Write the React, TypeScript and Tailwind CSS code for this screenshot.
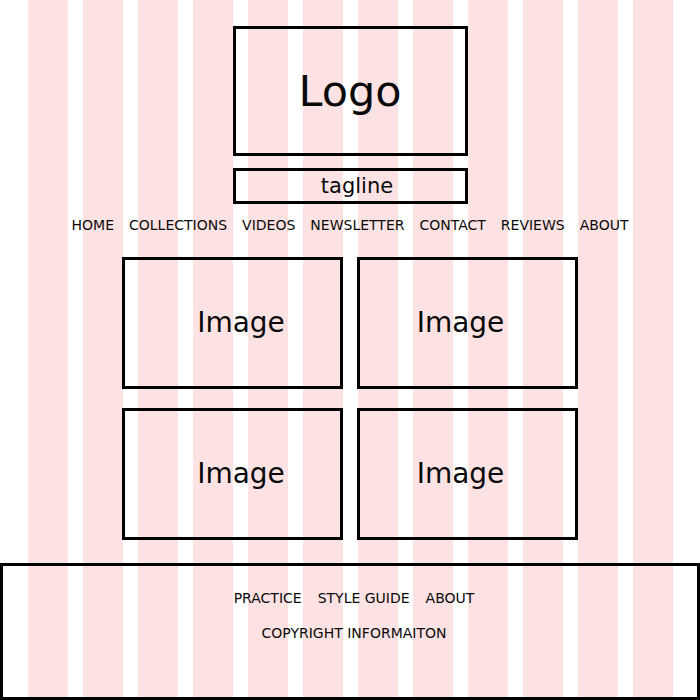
import React from "react";

const navItems = ["HOME", "COLLECTIONS", "VIDEOS", "NEWSLETTER", "CONTACT", "REVIEWS", "ABOUT"];

function ImageBox({ side }: { side: "left" | "right" }) {
  return (
    <div
      className={
        side === "left"
          ? "h-[132px] border-[3px] border-black flex items-center justify-center text-[28px] leading-none pl-[17px]"
          : "h-[132px] border-[3px] border-black flex items-center justify-center text-[28px] leading-none pr-[14px]"
      }
    >
      Image
    </div>
  );
}

export default function App() {
  return (
    <div className="relative w-[700px] h-[700px] overflow-hidden bg-white text-[#0a0a0a] font-['DejaVu_Sans',sans-serif]">
      <div className="absolute inset-0 flex gap-[15px] pl-[28px]">
        {Array.from({ length: 12 }).map((_, i) => (
          <div key={i} className="w-[40px] h-full bg-[#fde2e3]" />
        ))}
      </div>
      <div className="relative flex flex-col items-center">
        <div className="mt-[26px] w-[235px] h-[130px] border-[3px] border-black flex items-center justify-center text-[43px] leading-none">
          Logo
        </div>
        <div className="mt-[12px] w-[235px] h-[36px] border-[3px] border-black flex items-center justify-center text-[21px] leading-none pl-[14px]">
          tagline
        </div>
        <nav className="mt-[11px] flex gap-[15px] text-[14px] leading-[20px]">
          {navItems.map((n) => (
            <span key={n}>{n}</span>
          ))}
        </nav>
        <div className="mt-[22px] grid grid-cols-[221px_221px] gap-x-[14px] gap-y-[19px]">
          <ImageBox side="left" />
          <ImageBox side="right" />
          <ImageBox side="left" />
          <ImageBox side="right" />
        </div>
        <footer className="mt-[23px] w-full h-[137px] border-[3px] border-black flex flex-col items-center pt-[22px] pl-[8px] gap-[15px] text-[14px] leading-[20px]">
          <div className="flex gap-[16px]">
            <span>PRACTICE</span>
            <span>STYLE GUIDE</span>
            <span>ABOUT</span>
          </div>
          <div>COPYRIGHT INFORMAITON</div>
        </footer>
      </div>
    </div>
  );
}
